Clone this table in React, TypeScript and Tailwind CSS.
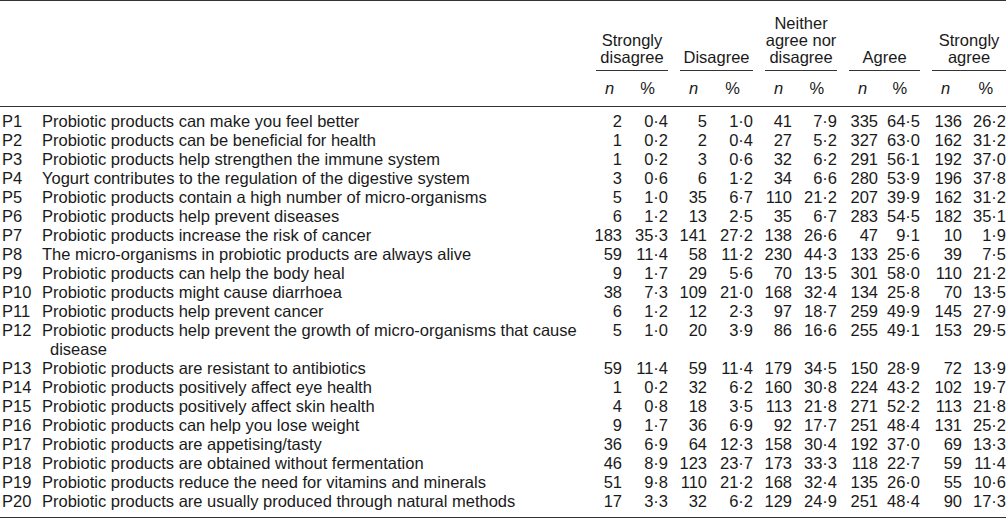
import { Fragment } from 'react';

const groups = [
  ['Strongly', 'disagree'],
  ['Disagree'],
  ['Neither', 'agree nor', 'disagree'],
  ['Agree'],
  ['Strongly', 'agree'],
];

// n / % column widths per group, taken from the printed table
const colWidths = [
  ['w-[38px]', 'w-[46px]'],
  ['w-[39px]', 'w-[46px]'],
  ['w-[39px]', 'w-[45px]'],
  ['w-[41px]', 'w-[42px]'],
  ['w-[42px]', 'w-[44px]'],
];

const rows: [string, string, string[]][] = [
  ['P1', 'Probiotic products can make you feel better', ['2', '0·4', '5', '1·0', '41', '7·9', '335', '64·5', '136', '26·2']],
  ['P2', 'Probiotic products can be beneficial for health', ['1', '0·2', '2', '0·4', '27', '5·2', '327', '63·0', '162', '31·2']],
  ['P3', 'Probiotic products help strengthen the immune system', ['1', '0·2', '3', '0·6', '32', '6·2', '291', '56·1', '192', '37·0']],
  ['P4', 'Yogurt contributes to the regulation of the digestive system', ['3', '0·6', '6', '1·2', '34', '6·6', '280', '53·9', '196', '37·8']],
  ['P5', 'Probiotic products contain a high number of micro-organisms', ['5', '1·0', '35', '6·7', '110', '21·2', '207', '39·9', '162', '31·2']],
  ['P6', 'Probiotic products help prevent diseases', ['6', '1·2', '13', '2·5', '35', '6·7', '283', '54·5', '182', '35·1']],
  ['P7', 'Probiotic products increase the risk of cancer', ['183', '35·3', '141', '27·2', '138', '26·6', '47', '9·1', '10', '1·9']],
  ['P8', 'The micro-organisms in probiotic products are always alive', ['59', '11·4', '58', '11·2', '230', '44·3', '133', '25·6', '39', '7·5']],
  ['P9', 'Probiotic products can help the body heal', ['9', '1·7', '29', '5·6', '70', '13·5', '301', '58·0', '110', '21·2']],
  ['P10', 'Probiotic products might cause diarrhoea', ['38', '7·3', '109', '21·0', '168', '32·4', '134', '25·8', '70', '13·5']],
  ['P11', 'Probiotic products help prevent cancer', ['6', '1·2', '12', '2·3', '97', '18·7', '259', '49·9', '145', '27·9']],
  ['P12', 'Probiotic products help prevent the growth of micro-organisms that cause disease', ['5', '1·0', '20', '3·9', '86', '16·6', '255', '49·1', '153', '29·5']],
  ['P13', 'Probiotic products are resistant to antibiotics', ['59', '11·4', '59', '11·4', '179', '34·5', '150', '28·9', '72', '13·9']],
  ['P14', 'Probiotic products positively affect eye health', ['1', '0·2', '32', '6·2', '160', '30·8', '224', '43·2', '102', '19·7']],
  ['P15', 'Probiotic products positively affect skin health', ['4', '0·8', '18', '3·5', '113', '21·8', '271', '52·2', '113', '21·8']],
  ['P16', 'Probiotic products can help you lose weight', ['9', '1·7', '36', '6·9', '92', '17·7', '251', '48·4', '131', '25·2']],
  ['P17', 'Probiotic products are appetising/tasty', ['36', '6·9', '64', '12·3', '158', '30·4', '192', '37·0', '69', '13·3']],
  ['P18', 'Probiotic products are obtained without fermentation', ['46', '8·9', '123', '23·7', '173', '33·3', '118', '22·7', '59', '11·4']],
  ['P19', 'Probiotic products reduce the need for vitamins and minerals', ['51', '9·8', '110', '21·2', '168', '32·4', '135', '26·0', '55', '10·6']],
  ['P20', 'Probiotic products are usually produced through natural methods', ['17', '3·3', '32', '6·2', '129', '24·9', '251', '48·4', '90', '17·3']],
];

export default function App() {
  return (
    <div className="w-[1006px] bg-white font-['Liberation_Sans',Arial,sans-serif] text-[16.5px] leading-[19px] text-[#1a1a1a]">
      <div className="border-y border-[#333] pb-[6px]">
        <table className="w-[1006px] table-fixed border-collapse">
          <colgroup>
            <col className="w-[40px]" />
            <col className="w-[544px]" />
            {colWidths.map(([nw, pw], i) => (
              <Fragment key={i}>
                <col className={nw} />
                <col className={pw} />
              </Fragment>
            ))}
          </colgroup>
          <thead>
            {/* group titles */}
            <tr>
              <th colSpan={2} />
              {groups.map((lines, i) => (
                <th key={i} colSpan={2} className="pt-[14px] align-bottom font-normal leading-[17px]">
                  <div className="ml-[12px] border-b border-[#333] pb-[4px] text-center">
                    {lines.map((l) => (
                      <div key={l}>{l}</div>
                    ))}
                  </div>
                </th>
              ))}
            </tr>
            <tr className="border-b border-[#333]">
              <th colSpan={2} />
              {groups.map((_, i) => (
                <Fragment key={i}>
                  <th className="pt-[8px] pb-[8px] pl-[21px] text-left font-normal italic">n</th>
                  <th className="pt-[8px] pb-[8px] pr-[13px] text-right font-normal">%</th>
                </Fragment>
              ))}
            </tr>
          </thead>
          <tbody>
            {rows.map(([code, text, nums], r) => (
              <tr key={code}>
                <td className={`pl-[2px] align-top ${r === 0 ? 'pt-[5px]' : ''}`}>{code}</td>
                <td className={`pl-[10px] indent-[-8px] align-top ${r === 0 ? 'pt-[5px]' : ''}`}>{text}</td>
                {nums.map((v, c) => (
                  <td key={c} className={`text-right align-top whitespace-nowrap ${r === 0 ? 'pt-[5px]' : ''}`}>
                    {v}
                  </td>
                ))}
              </tr>
            ))}
          </tbody>
        </table>
      </div>
    </div>
  );
}
